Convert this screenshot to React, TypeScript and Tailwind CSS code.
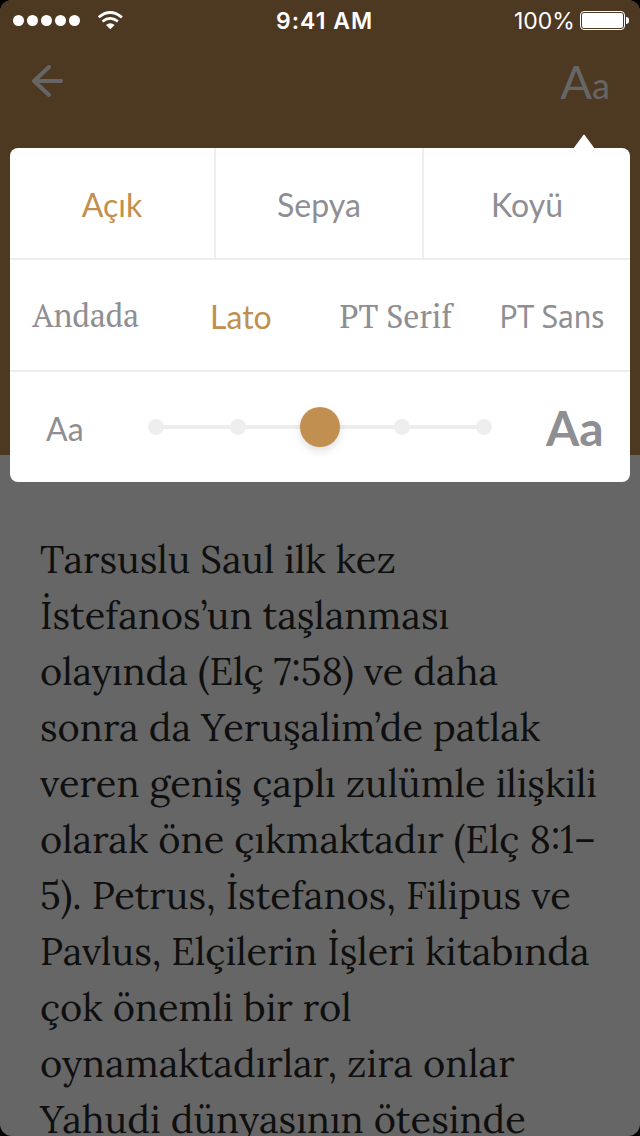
import { clsx } from "clsx";

const LATO = "font-['Lato','Liberation_Sans',sans-serif]";

const passage = [
  "Tarsuslu Saul ilk kez",
  "İstefanos’un taşlanması",
  "olayında (Elç 7:58) ve daha",
  "sonra da Yeruşalim’de patlak",
  "veren geniş çaplı zulümle ilişkili",
  "olarak öne çıkmaktadır (Elç 8:1–",
  "5). Petrus, İstefanos, Filipus ve",
  "Pavlus, Elçilerin İşleri kitabında",
  "çok önemli bir rol",
  "oynamaktadırlar, zira onlar",
  "Yahudi dünyasının ötesinde",
];

function StatusBar() {
  return (
    <div className="flex h-10 shrink-0 items-center font-['Inter','Liberation_Sans',sans-serif] text-white">
      <div className="flex w-[276px] items-center pl-[13px]">
        <div className="flex gap-[3px]">
          {[0, 1, 2, 3, 4].map((i) => (
            <span key={i} className="size-[11px] rounded-full bg-white" />
          ))}
        </div>
        <svg className="ml-[17px] h-[20px] w-[26px]" viewBox="0 0 26 20" fill="none">
          <path d="M1.7 7.3Q13 -2.4 24.9 7.3" stroke="white" strokeWidth="2.8" />
          <path d="M5.5 11.4Q13 5.4 20.9 11.4" stroke="white" strokeWidth="2.6" />
          <path d="M9 15.1Q13.2 11.5 17.6 15.1L13.3 19.2Z" fill="white" />
        </svg>
      </div>
      <span className="w-[238px] whitespace-nowrap pt-[2px] text-[23px] leading-[40px] font-semibold tracking-[1px]">9:41 AM</span>
      <span className="w-[66px] whitespace-nowrap pt-[2px] text-[23px] leading-[40px] tracking-[0px]">100%</span>
      <div className="flex h-[19px] w-[45px] rounded-[4px] border border-white p-px">
        <div className="flex-1 rounded-[2px] bg-white" />
      </div>
      <div className="ml-px h-[7px] w-[3px] rounded-r-full bg-white" />
    </div>
  );
}

function Toolbar() {
  return (
    <div className="flex h-[94px] shrink-0 items-start justify-between pr-[30px] pl-[31px]">
      <svg className="mt-6 h-[34px] w-8" viewBox="0 0 32 34" fill="none" stroke="#666" strokeWidth="4" strokeLinecap="round" strokeLinejoin="round">
        <path d="M18 3L3 17L18 31M3 17H30" />
      </svg>
      <div className={clsx(LATO, "mt-[19px] flex items-baseline leading-[44px] text-[#666]")}>
        <span className="text-[47px]">A</span>
        <span className="text-[36px]">a</span>
      </div>
    </div>
  );
}

function SizeSlider() {
  return (
    <div className="relative flex h-10 w-[344px] items-center justify-between">
      <div className="absolute inset-x-2 top-[18px] h-1 bg-[#eee]" />
      <span className="relative size-4 rounded-full bg-[#eee]" />
      <span className="relative size-4 rounded-full bg-[#eee]" />
      <span className="relative -mx-3 size-10 rounded-full bg-[#c18f4f] shadow-[0_4px_8px_rgba(0,0,0,0.13)]" />
      <span className="relative size-4 rounded-full bg-[#eee]" />
      <span className="relative size-4 rounded-full bg-[#eee]" />
    </div>
  );
}

function SettingsPanel() {
  return (
    <div className="relative z-10 mx-[10px] flex h-[334px] shrink-0 flex-col rounded-[8px] bg-white text-[32px] text-[#8e8e93]">
      <svg className="absolute -top-[14px] right-[35px] h-[15px] w-[22px]" viewBox="0 0 22 15">
        <path d="M0 15L0.8 14L10.3 0.9Q11 0 11.7 0.9L21.2 14L22 15Z" fill="white" />
      </svg>
      <div className={clsx(LATO, "flex h-[112px] border-b-2 border-[#eee] leading-[114px]")}>
        <div className="w-[206px] border-r-2 border-[#eee] text-center text-[#c18f4f]">Açık</div>
        <div className="w-[208px] border-r-2 border-[#eee] text-center">Sepya</div>
        <div className="flex-1 text-center">Koyü</div>
      </div>
      <div className="flex h-[112px] border-b-2 border-[#eee] leading-[112px] whitespace-nowrap">
        <span className="w-[200px] pl-[22px] font-['Andada','PT_Serif','Noto_Serif','Liberation_Serif',serif] text-[32px] leading-[110px] tracking-[-0.3px]">Andada</span>
        <span className={clsx(LATO, "w-[129.5px] leading-[114px] text-[#c18f4f]")}>Lato</span>
        <span className="w-[160px] font-['PT_Serif','Noto_Serif','Liberation_Serif',serif] text-[32px]">PT Serif</span>
        <span className="font-['PT_Sans','Noto_Sans','Liberation_Sans',sans-serif] text-[32px] tracking-[-0.2px]">PT Sans</span>
      </div>
      <div className={clsx(LATO, "flex h-[110px] items-center")}>
        <span className="w-[128px] pt-[3px] pl-[36px] leading-[111px]">Aa</span>
        <div className="w-[408px] pl-[10px]"><SizeSlider /></div>
        <span className="pt-px text-[48px] leading-[109px] font-bold">Aa</span>
      </div>
    </div>
  );
}

export default function App() {
  return (
    <div className="h-[1136px] w-[640px] overflow-hidden bg-black">
      <div className="flex h-[1136px] flex-col overflow-hidden rounded-[12px] bg-[#666]">
        <div className="flex h-[455px] shrink-0 flex-col bg-[#4d3822]">
          <StatusBar />
          <Toolbar />
          <div className="h-[14px] shrink-0" />
          <SettingsPanel />
        </div>
        <article className="px-10 pt-[76px] font-['Lora','Noto_Serif','Liberation_Serif',serif] text-[38px] leading-[56px] whitespace-nowrap text-[#0f0f0f]">
          {passage.map((line) => (
            <p key={line}>{line}</p>
          ))}
        </article>
      </div>
    </div>
  );
}
